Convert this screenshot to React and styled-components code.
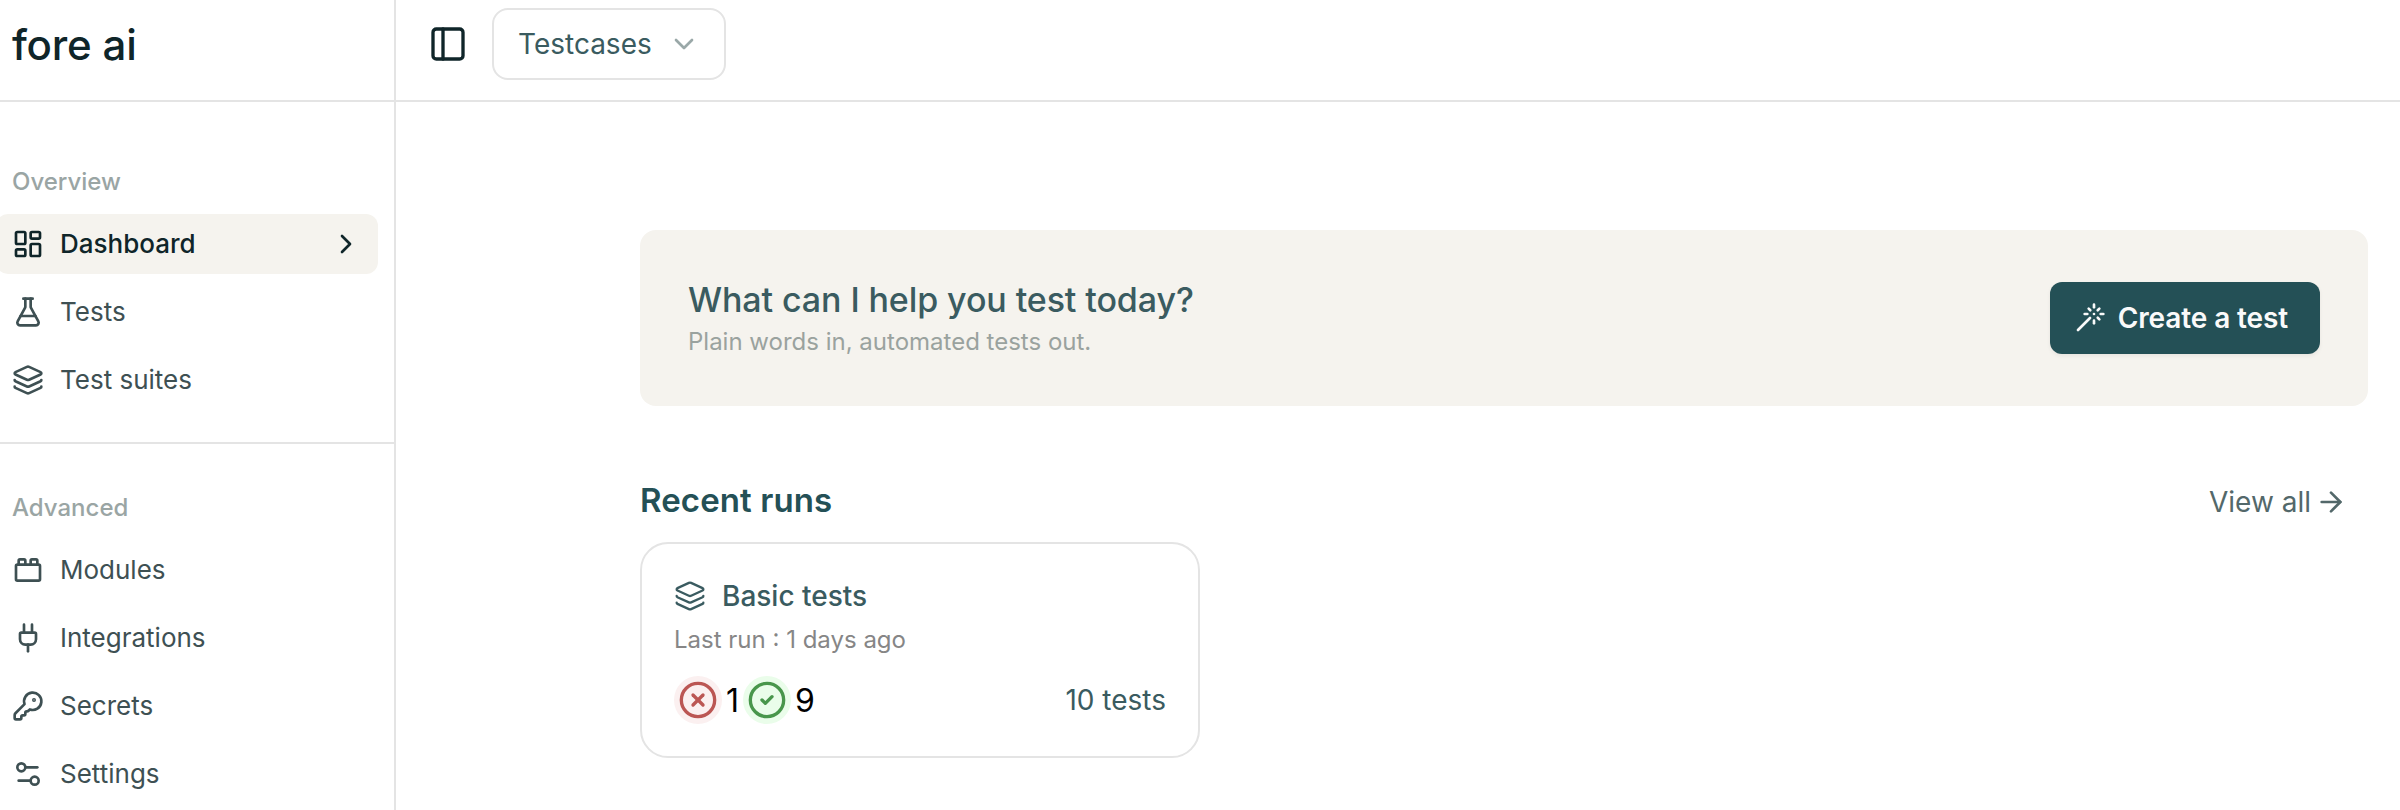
import React from 'react';
import styled, { createGlobalStyle } from 'styled-components';
import {
  ArrowRight,
  ChevronDown,
  ChevronRight,
  CircleCheck,
  CircleX,
  FlaskConical,
  KeyRound,
  Layers,
  LayoutDashboard,
  PanelLeft,
  Plug,
  Settings2,
  ToyBrick,
  Wand,
} from 'lucide-react';

const GlobalStyle = createGlobalStyle`
  *, *::before, *::after { box-sizing: border-box; }
  body {
    margin: 0;
    background: #fff;
    font-family: Inter, "Liberation Sans", sans-serif;
    overflow: hidden;
  }
  svg { display: block; flex: none; }
`;

const Shell = styled.div`
  display: flex;
  height: 100vh;
  overflow: hidden;
`;

const Sidebar = styled.aside`
  flex: none;
  width: 396px;
  border-right: 2px solid #e4e4e4;
`;

const Brand = styled.div`
  display: flex;
  align-items: center;
  height: 102px;
  padding: 0 0 12px 12px;
  border-bottom: 2px solid #e4e4e4;
  color: #0f2529;
  font-size: 42px;
  font-weight: 500;
  letter-spacing: -0.2px;
`;

const NavGroup = styled.nav`
  display: flex;
  flex-direction: column;
  gap: 8px;
  padding: ${({ $top }) => $top}px 16px 32px 0;
  border-bottom: 2px solid #e4e4e4;

  &:last-child { border-bottom: 0; }
`;

const NavLabel = styled.div`
  height: 40px;
  margin-bottom: 4px;
  padding-left: 12px;
  color: #9aa5a4;
  font-size: 24px;
  font-weight: 500;
  line-height: 40px;
`;

const NavItem = styled.a`
  display: flex;
  align-items: center;
  gap: 16px;
  height: 60px;
  margin-left: -4px;
  padding: 0 16px;
  border-radius: 12px;
  background: ${({ $active }) => ($active ? '#f5f3ee' : 'transparent')};
  color: ${({ $active }) => ($active ? '#0f2529' : '#3e5053')};
  font-size: 26px;
  font-weight: ${({ $active }) => ($active ? 500 : 400)};
`;

const NavText = styled.span`
  flex: 1;
  padding-bottom: 2px;
`;

const Main = styled.main`
  flex: 1;
  min-width: 0;
`;

const TopBar = styled.header`
  display: flex;
  align-items: center;
  gap: 24px;
  height: 102px;
  padding: 0 0 12px 32px;
  border-bottom: 2px solid #e4e4e4;
  color: #0f2529;
`;

const Select = styled.button`
  display: flex;
  align-items: center;
  gap: 16px;
  height: 72px;
  padding: 0 24px;
  border: 2px solid #e4e4e4;
  border-radius: 16px;
  background: #fff;
  color: #3a5b60;
  font: 400 28px Inter, sans-serif;

  svg { color: #9aa8a8; }
`;

const Content = styled.div`
  padding: 128px 32px 0 244px;
`;

const Hero = styled.section`
  display: flex;
  align-items: center;
  justify-content: space-between;
  height: 176px;
  padding: 0 48px;
  border-radius: 16px;
  background: #f5f3ee;
`;

const HeroTitle = styled.h1`
  margin: 0;
  color: #3a5b60;
  font-size: 34px;
  font-weight: 500;
  line-height: 48px;
  letter-spacing: -0.1px;
`;

const HeroText = styled.p`
  margin: 0;
  color: #9aa29e;
  font-size: 24px;
  line-height: 36px;
`;

const PrimaryButton = styled.button`
  display: flex;
  align-items: center;
  gap: 12px;
  height: 72px;
  padding: 0 32px 0 24px;
  border: 0;
  border-radius: 12px;
  background: #245056;
  box-shadow: 0 2px 4px rgba(0, 0, 0, 0.06);
  color: #fafafa;
  font: 600 28px Inter, sans-serif;
  letter-spacing: -0.12px;
`;

const SectionHeader = styled.div`
  display: flex;
  align-items: center;
  justify-content: space-between;
  height: 136px;
  padding: 55px 21px 0 0;
`;

const SectionTitle = styled.h2`
  margin: 0 0 3px;
  color: #245056;
  font-size: 33px;
  font-weight: 600;
  line-height: 40px;
  letter-spacing: 0.1px;
`;

const ViewAll = styled.a`
  display: flex;
  align-items: center;
  gap: 4px;
  color: #53686a;
  font-size: 28px;
`;

const RunCard = styled.article`
  width: 560px;
  height: 216px;
  padding: 32px;
  border: 2px solid #e4e4e4;
  border-radius: 28px;
`;

const RunTitle = styled.div`
  display: flex;
  align-items: center;
  gap: 16px;
  height: 40px;
  color: #3a5b60;
  font-size: 28px;
  font-weight: 500;
`;

const RunMeta = styled.div`
  margin-top: 8px;
  color: #868686;
  font-size: 24px;
  line-height: 32px;
`;

const RunFooter = styled.div`
  display: flex;
  align-items: center;
  height: 48px;
  margin-top: 20px;
  color: #000;
  font-size: 32px;
`;

const StatusBadge = styled.span`
  display: grid;
  place-items: center;
  width: 48px;
  height: 48px;
  margin-right: 4px;
  border-radius: 50%;
  background: ${({ $passed }) => ($passed ? '#eafdea' : '#fbf0f0')};
  color: ${({ $passed }) => ($passed ? '#48964b' : '#bb5653')};
`;

const StatusCount = styled.span`
  margin-right: 4px;
`;

const RunTotal = styled.span`
  margin-left: auto;
  color: #3a5b60;
  font-size: 28px;
`;

const overview = [
  { label: 'Dashboard', icon: LayoutDashboard, active: true },
  { label: 'Tests', icon: FlaskConical },
  { label: 'Test suites', icon: Layers },
];

const advanced = [
  { label: 'Modules', icon: ToyBrick },
  { label: 'Integrations', icon: Plug },
  { label: 'Secrets', icon: KeyRound },
  { label: 'Settings', icon: Settings2 },
];

function NavSection({ title, items, top }) {
  return (
    <NavGroup $top={top}>
      <NavLabel>{title}</NavLabel>
      {items.map(({ label, icon: Icon, active }) => (
        <NavItem key={label} $active={active}>
          <Icon size={32} strokeWidth={2} />
          <NavText>{label}</NavText>
          {active && <ChevronRight size={32} strokeWidth={2} />}
        </NavItem>
      ))}
    </NavGroup>
  );
}

export default function App() {
  return (
    <Shell>
      <GlobalStyle />
      <Sidebar>
        <Brand>fore ai</Brand>
        <NavSection title="Overview" items={overview} top={60} />
        <NavSection title="Advanced" items={advanced} top={44} />
      </Sidebar>
      <Main>
        <TopBar>
          <PanelLeft size={40} strokeWidth={2} />
          <Select>
            Testcases
            <ChevronDown size={32} strokeWidth={2} />
          </Select>
        </TopBar>
        <Content>
          <Hero>
            <div>
              <HeroTitle>What can I help you test today?</HeroTitle>
              <HeroText>Plain words in, automated tests out.</HeroText>
            </div>
            <PrimaryButton>
              <Wand size={32} strokeWidth={2} />
              Create a test
            </PrimaryButton>
          </Hero>
          <SectionHeader>
            <SectionTitle>Recent runs</SectionTitle>
            <ViewAll>
              View all
              <ArrowRight size={32} strokeWidth={2} />
            </ViewAll>
          </SectionHeader>
          <RunCard>
            <RunTitle>
              <Layers size={32} strokeWidth={1.75} />
              Basic tests
            </RunTitle>
            <RunMeta>Last run : 1 days ago</RunMeta>
            <RunFooter>
              <StatusBadge>
                <CircleX size={40} strokeWidth={2} />
              </StatusBadge>
              <StatusCount>1</StatusCount>
              <StatusBadge $passed>
                <CircleCheck size={40} strokeWidth={2} />
              </StatusBadge>
              <StatusCount>9</StatusCount>
              <RunTotal>10 tests</RunTotal>
            </RunFooter>
          </RunCard>
        </Content>
      </Main>
    </Shell>
  );
}
